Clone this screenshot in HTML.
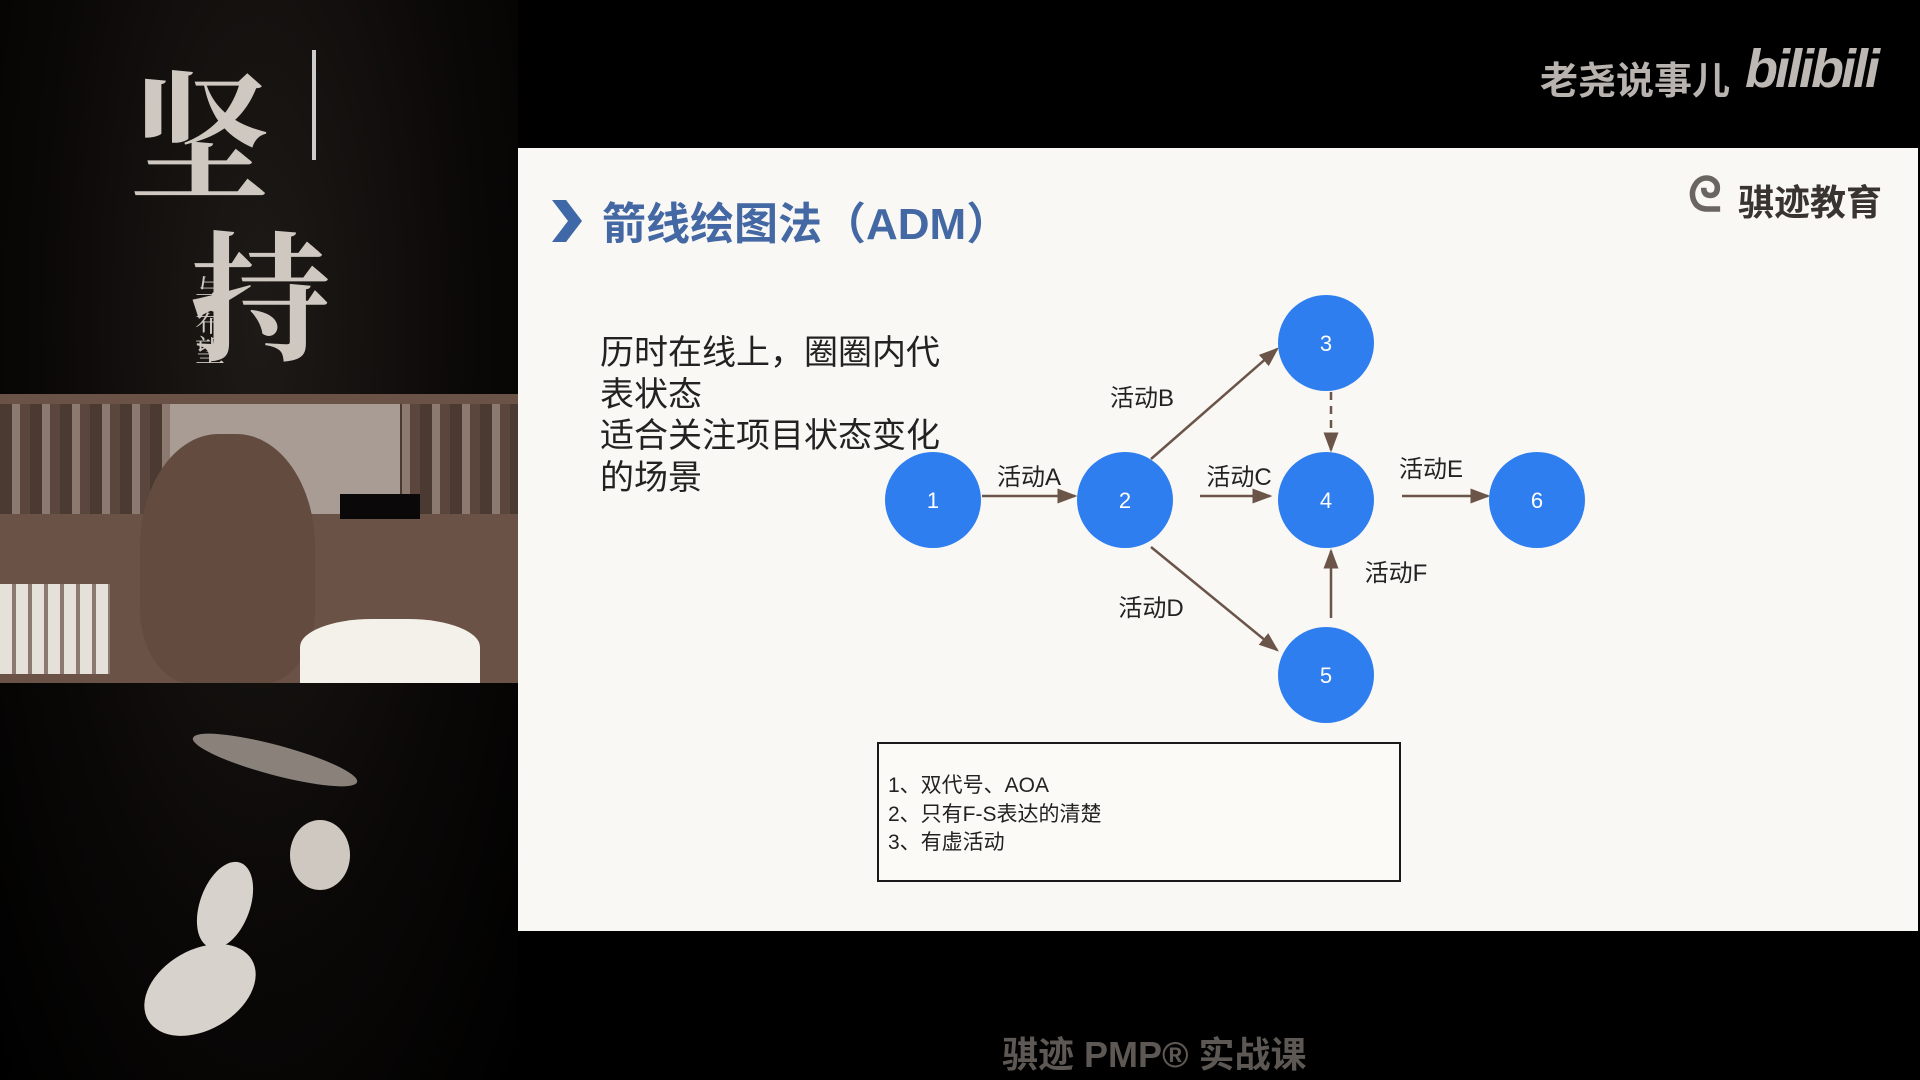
<!DOCTYPE html>
<html><head><meta charset="utf-8"><style>
*{margin:0;padding:0;box-sizing:border-box}
body{width:1920px;height:1080px;background:#000;position:relative;overflow:hidden;font-family:"Liberation Sans","Noto Sans CJK SC",sans-serif}
.abs{position:absolute}
.t{position:absolute;white-space:nowrap}
</style></head><body>
<div class="abs" style="left:0;top:0;width:518px;height:1080px;background:radial-gradient(ellipse at 50% 30%,#1e1a17 0%,#0a0807 60%,#000 100%)"></div>
<div class="abs" style="left:130px;top:50px;width:210px;height:330px;color:#cfc8c0;font-family:'Noto Serif CJK SC',serif;font-size:140px;line-height:160px;font-weight:bold">坚<br><span style="margin-left:60px">持</span></div>
<div class="t" style="left:188px;top:275px;color:#cfc8c0;font-size:30px;writing-mode:vertical-rl;font-family:'Noto Serif CJK SC',serif">与希望</div>
<div class="abs" style="left:312px;top:50px;width:4px;height:110px;background:#ccc"></div>
<div class="abs" style="left:140px;top:950px;width:120px;height:80px;background:#d8d2cc;border-radius:50%;transform:rotate(-30deg)"></div>
<div class="abs" style="left:200px;top:860px;width:50px;height:90px;background:#d8d2cc;border-radius:50%;transform:rotate(20deg)"></div>
<div class="abs" style="left:290px;top:820px;width:60px;height:70px;background:#cfc8c0;border-radius:50%"></div>
<div class="abs" style="left:190px;top:745px;width:170px;height:30px;background:#bdb4aa;border-radius:50%;transform:rotate(15deg);opacity:.7"></div>
<div class="abs" style="left:0;top:394px;width:518px;height:289px;background:#6b5246;overflow:hidden">
 <div class="abs" style="left:0;top:10px;width:518px;height:110px;background:repeating-linear-gradient(90deg,#4a3a32 0 12px,#8c7a70 12px 20px,#5a463c 20px 30px)"></div>
 <div class="abs" style="left:170px;top:10px;width:230px;height:110px;background:#a89c94"></div>
 <div class="abs" style="left:0;top:190px;width:110px;height:90px;background:repeating-linear-gradient(90deg,#e6e0da 0 12px,#8c7a70 12px 16px)"></div>
 <div class="abs" style="left:140px;top:40px;width:175px;height:250px;background:#644b40;border-radius:45% 45% 30% 30%"></div>
 <div class="abs" style="left:300px;top:225px;width:180px;height:70px;background:#f4f0ea;border-radius:40% 40% 0 0"></div>
 <div class="abs" style="left:340px;top:100px;width:80px;height:25px;background:#0a0808"></div>
</div>
<div class="t" style="left:1540px;top:50px;font-size:38px;color:#b8b3ae;font-weight:bold">老尧说事儿</div>
<div class="t" style="left:1745px;top:38px;font-size:54px;color:#bdb8b3;font-weight:bold;font-style:italic;letter-spacing:-3px">bilibili</div>
<div class="abs" style="left:518px;top:148px;width:1400px;height:783px;background:#f9f8f5"></div>
<svg class="abs" style="left:550px;top:198px" width="34" height="46"><polygon points="2,2 16,2 32,23 16,44 2,44 18,23" fill="#3f68a8"/></svg>
<div class="t" style="left:602px;top:188px;font-size:44px;font-weight:bold;color:#4468a4">箭线绘图法（ADM）</div>
<div class="t" style="left:1688px;top:168px;font-size:48px;color:#6a6560;font-weight:bold">ᘓ</div>
<div class="t" style="left:1738px;top:174px;font-size:36px;font-weight:bold;color:#3a3431">骐迹教育</div>
<div class="t" style="left:600px;top:333px;font-size:34px;line-height:41.5px;color:#222">历时在线上，圈圈内代<br>表状态<br>适合关注项目状态变化<br>的场景</div>
<svg class="abs" style="left:0;top:0" width="1920" height="1080">
<defs><marker id="a" markerWidth="8" markerHeight="8" refX="7" refY="4" orient="auto"><path d="M0,1 L8,4 L0,7z" fill="#6b5448"/></marker></defs>
<g stroke="#6b5448" stroke-width="2.5" fill="none" marker-end="url(#a)">
<line x1="982" y1="496" x2="1075" y2="496"/>
<line x1="1151" y1="459" x2="1277" y2="349"/>
<line x1="1200" y1="496" x2="1270" y2="496"/>
<line x1="1331" y1="392" x2="1331" y2="450" stroke-dasharray="8 6"/>
<line x1="1402" y1="496" x2="1488" y2="496"/>
<line x1="1331" y1="618" x2="1331" y2="551"/>
<line x1="1151" y1="547" x2="1277" y2="650"/>
</g>
<g fill="#2f7ef0"><circle cx="933" cy="500" r="48"/><circle cx="1125" cy="500" r="48"/><circle cx="1326" cy="343" r="48"/><circle cx="1326" cy="500" r="48"/><circle cx="1326" cy="675" r="48"/><circle cx="1537" cy="500" r="48"/></g>
<g fill="#fff" font-size="22" text-anchor="middle" font-family="Liberation Sans,sans-serif"><text x="933" y="508">1</text><text x="1125" y="508">2</text><text x="1326" y="351">3</text><text x="1326" y="508">4</text><text x="1326" y="683">5</text><text x="1537" y="508">6</text></g>
<g fill="#222" font-size="24" font-family="Liberation Sans,Noto Sans CJK SC,sans-serif" text-anchor="middle"><text x="1029" y="485">活动A</text><text x="1142" y="406">活动B</text><text x="1239" y="485">活动C</text><text x="1151" y="616">活动D</text><text x="1431" y="477">活动E</text><text x="1396" y="581">活动F</text></g>
</svg>
<div class="abs" style="left:877px;top:742px;width:524px;height:140px;border:2.5px solid #1a1a1a;background:#fbfaf7"></div>
<div class="t" style="left:888px;top:772px;font-size:21px;line-height:28.5px;color:#222">1、双代号、AOA<br>2、只有F-S表达的清楚<br>3、有虚活动</div>
<div class="t" style="left:1002px;top:1026px;font-size:36px;font-weight:bold;color:#5d5853">骐迹 PMP® 实战课</div>
</body></html>
